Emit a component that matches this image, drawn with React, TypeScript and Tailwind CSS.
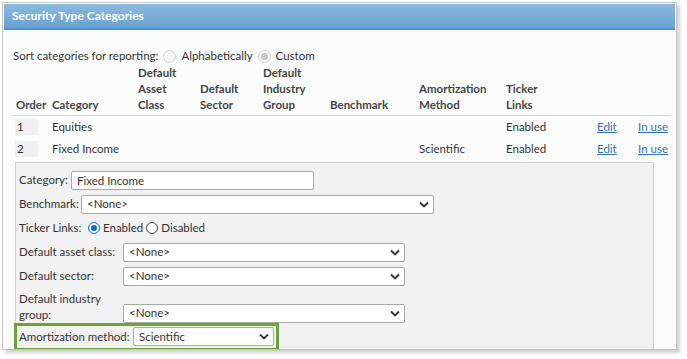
import React from 'react';

const font = { fontFamily: 'Lato, "Open Sans", Arial, sans-serif' };

function Chevron() {
  return (
    <svg width="10" height="7" viewBox="0 0 10 7" className="ml-auto mr-[4px]">
      <path d="M1 1.5 L5 5.5 L9 1.5" fill="none" stroke="#333" strokeWidth="1.8" />
    </svg>
  );
}

function Select({ value, w }: { value: string; w: string }) {
  return (
    <div className={`flex items-center h-[19px] bg-white border border-[#a9a9a9] rounded-[2px] pl-[5px] ${w}`}>
      <span>{value}</span>
      <Chevron />
    </div>
  );
}

function Radio({ on, muted }: { on?: boolean; muted?: boolean }) {
  if (muted) {
    return (
      <span className="inline-flex items-center justify-center w-[13px] h-[13px] rounded-full border border-[#d0d0d0] bg-[#f6f6f6]">
        {on && <span className="w-[7px] h-[7px] rounded-full bg-[#c8c8c8]" />}
      </span>
    );
  }
  return (
    <span
      className={`inline-flex items-center justify-center w-[12px] h-[12px] rounded-full border ${
        on ? 'border-[#0b68e0]' : 'border-[#444]'
      } bg-white`}
    >
      {on && <span className="w-[6px] h-[6px] rounded-full bg-[#0b68e0]" />}
    </span>
  );
}

const cols = [36, 86, 62, 63, 67, 89, 87, 91, 41, 36];

export default function App() {
  return (
    <div className="w-[687px] h-[359px] bg-white text-[11.5px] text-[#333] whitespace-nowrap" style={font}>
      <div className="ml-[2px] mt-[2px] w-[675px] h-[348px] border border-[#c4c4c4] bg-[#fbfdfd] p-[1px] overflow-hidden shadow-[3px_3px_3px_rgba(0,0,0,0.18)]">
        {/* Header bar */}
        <div className="h-[26px] bg-gradient-to-b from-[#8cb9df] to-[#6aa2d0] border-b-2 border-[#4a92d6] flex items-center pl-[8px] text-white font-bold text-[12px]">
          Security Type Categories
        </div>

        {/* Sort line */}
        <div className="flex items-center h-[20px] mt-[16px] pl-[9px] gap-[5px]">
          <span>Sort categories for reporting:</span>
          <Radio muted />
          <span>Alphabetically</span>
          <Radio muted on />
          <span>Custom</span>
        </div>

        {/* Table */}
        <table className="table-fixed border-collapse ml-[9px] mt-[-1px]" style={{ width: 658 }}>
          <colgroup>
            {cols.map((c, i) => (
              <col key={i} style={{ width: c }} />
            ))}
          </colgroup>
          <thead>
            <tr className="border-b border-[#d8d8d8] font-bold text-[#444] leading-[16px] align-bottom">
              <td className="pl-[3px] pb-[2px]">Order</td>
              <td className="pl-[3px] pb-[2px]">Category</td>
              <td className="pl-[3px] pb-[2px]">Default<br />Asset<br />Class</td>
              <td className="pl-[3px] pb-[2px]">Default<br />Sector</td>
              <td className="pl-[3px] pb-[2px]">Default<br />Industry<br />Group</td>
              <td className="pl-[3px] pb-[2px]">Benchmark</td>
              <td className="pl-[3px] pb-[2px]">Amortization<br />Method</td>
              <td className="pl-[3px] pb-[2px]">Ticker<br />Links</td>
              <td></td>
              <td></td>
            </tr>
          </thead>
          <tbody>
            {[
              ['1', 'Equities', ''],
              ['2', 'Fixed Income', 'Scientific'],
            ].map(([n, name, am]) => (
              <tr key={n} className="h-[22px]">
                <td className="pl-[2px]">
                  <div className="w-[23px] h-[16px] bg-[#f0f0f0] pl-[2px] leading-[16px]">{n}</div>
                </td>
                <td className="pl-[3px]">{name}</td>
                <td></td>
                <td></td>
                <td></td>
                <td></td>
                <td className="pl-[3px]">{am}</td>
                <td className="pl-[3px]">Enabled</td>
                <td className="pl-[3px]">
                  <span className="underline text-[#2e74b5]">Edit</span>
                </td>
                <td className="pl-[3px]">
                  <span className="underline text-[#2e74b5]">In use</span>
                </td>
              </tr>
            ))}
          </tbody>
        </table>

        {/* Edit panel */}
        <div className="ml-[11px] mt-[2px] w-[639px] h-[200px] bg-[#f2f2f2] border border-[#d0d0d0] pl-[3px] pt-[8px] flex flex-col gap-[5px]">
          <div className="flex items-center">
            <span className="w-[52px]">Category:</span>
            <div className="h-[19px] w-[243px] bg-white border border-[#a9a9a9] rounded-[2px] pl-[5px] leading-[17px]">
              Fixed Income
            </div>
          </div>
          <div className="flex items-center">
            <span className="w-[62px]">Benchmark:</span>
            <Select value="<None>" w="w-[353px]" />
          </div>
          <div className="flex items-center h-[19px]">
            <span className="w-[69px]">Ticker Links:</span>
            <Radio on />
            <span className="ml-[3px] mr-[3px]">Enabled</span>
            <Radio />
            <span className="ml-[3px]">Disabled</span>
          </div>
          <div className="flex items-center">
            <span className="w-[104px]">Default asset class:</span>
            <Select value="<None>" w="w-[282px]" />
          </div>
          <div className="flex items-center">
            <span className="w-[104px]">Default sector:</span>
            <Select value="<None>" w="w-[282px]" />
          </div>
          <div className="flex items-end">
            <span className="w-[104px] leading-[16px]">Default industry<br />group:</span>
            <Select value="<None>" w="w-[282px]" />
          </div>
          <div className="ml-[-5px] mt-[-5px] w-[265px] h-[28px] border-[3px] border-[#6aa434] flex items-center pl-[2px]">
            <span className="w-[114px]">Amortization method:</span>
            <Select value="Scientific" w="w-[141px]" />
          </div>
        </div>
      </div>
    </div>
  );
}
